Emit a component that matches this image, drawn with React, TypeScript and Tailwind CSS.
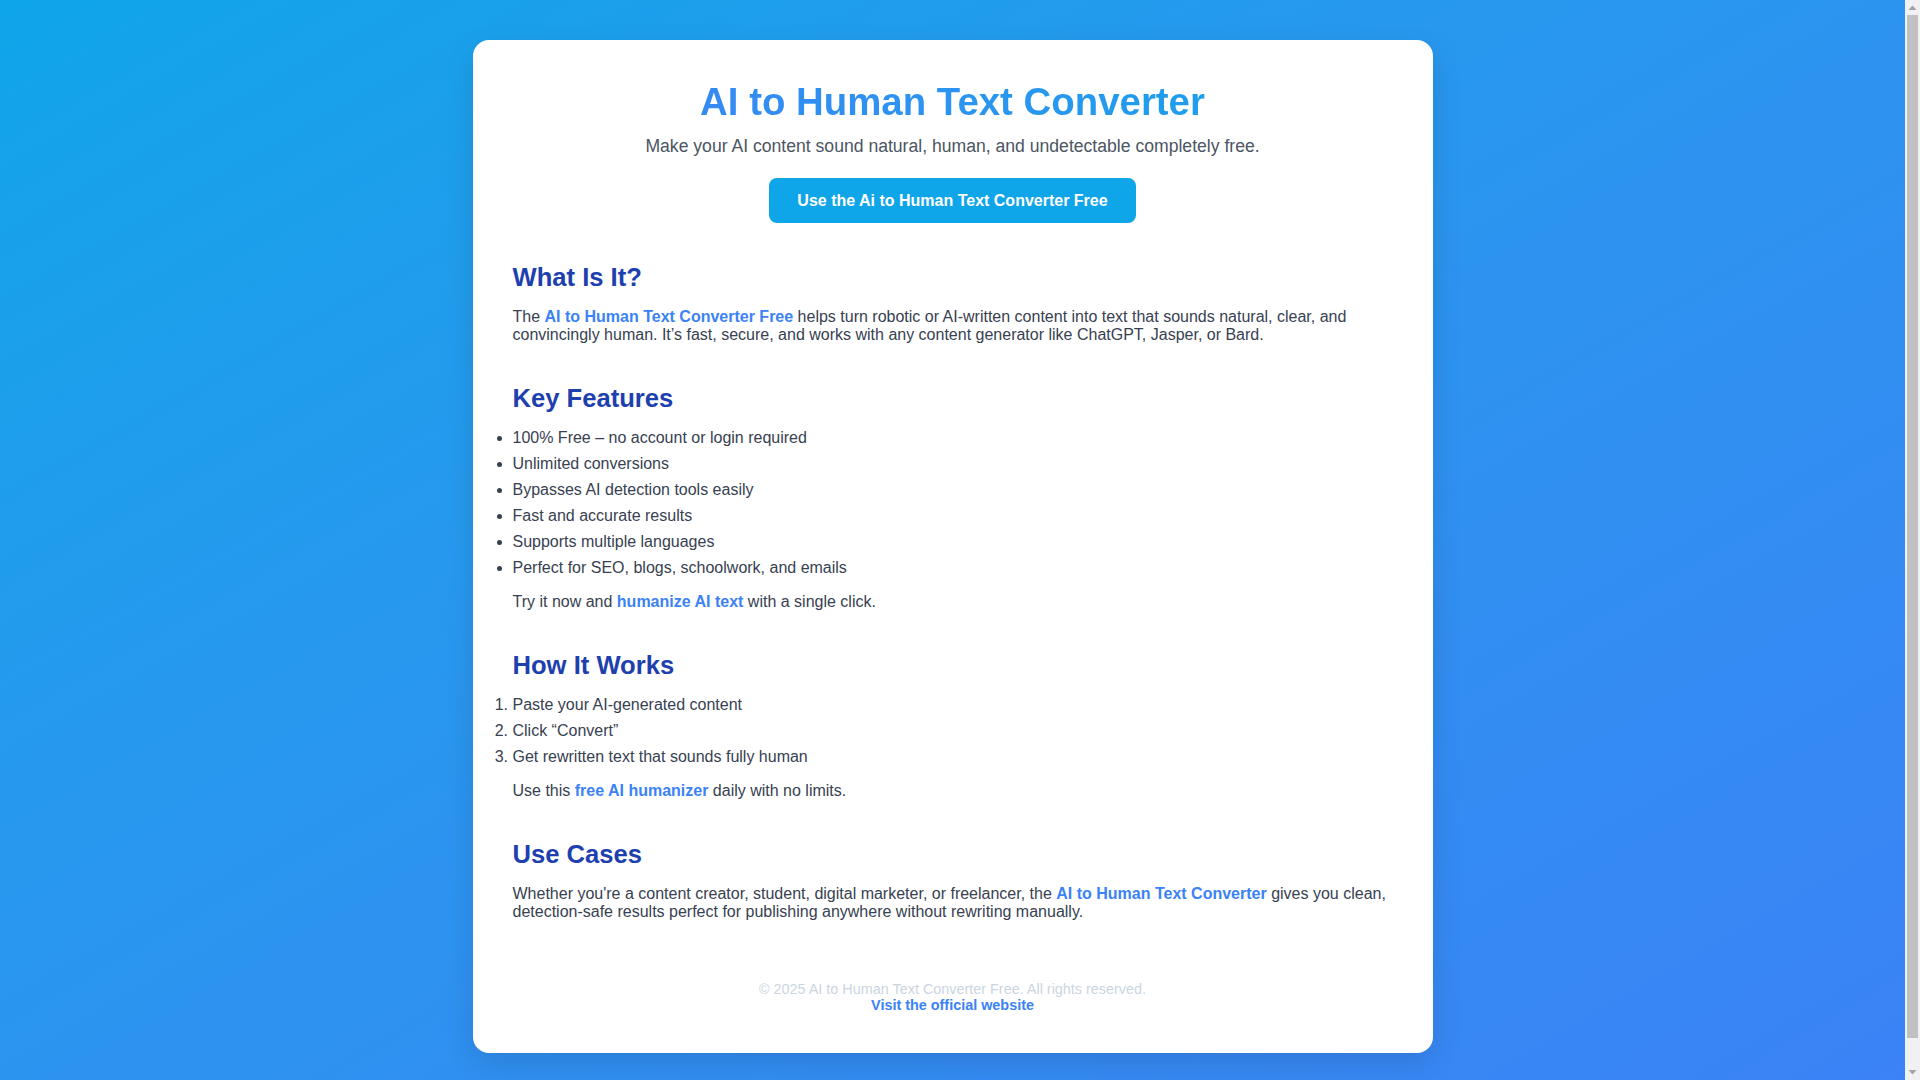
const features = [
  "100% Free – no account or login required",
  "Unlimited conversions",
  "Bypasses AI detection tools easily",
  "Fast and accurate results",
  "Supports multiple languages",
  "Perfect for SEO, blogs, schoolwork, and emails",
];

const steps = [
  "Paste your AI-generated content",
  "Click “Convert”",
  "Get rewritten text that sounds fully human",
];

function Link({ children }: { children: React.ReactNode }) {
  return <a href="#" className="font-bold text-[#3b82f6] no-underline">{children}</a>;
}

function Heading({ children }: { children: React.ReactNode }) {
  return <h2 className="mb-4 text-[25.6px] font-bold leading-[normal] text-[#1e40af]">{children}</h2>;
}

// browser scrollbar as seen in the screenshot
function Scrollbar() {
  return (
    <div className="fixed top-0 right-0 flex h-screen w-[15px] flex-col items-center bg-[#f1f1f1]">
      <svg width="15" height="15" viewBox="0 0 15 15" className="shrink-0">
        <path d="M3.5 10 L7.5 5.5 L11.5 10 Z" fill="#a3a3a3" />
      </svg>
      <div className="mb-[27px] w-[11px] flex-1 bg-[#c1c1c1]" />
      <svg width="15" height="15" viewBox="0 0 15 15" className="shrink-0">
        <path d="M3.5 5 L7.5 9.5 L11.5 5 Z" fill="#a3a3a3" />
      </svg>
    </div>
  );
}

export default function App() {
  return (
    <div
      className="min-h-screen bg-linear-to-br from-[#0ea5e9] to-[#3b82f6] py-10 pr-[15px] text-[16px] leading-[normal] text-[#374151]"
      style={{ fontFamily: '"Liberation Sans", Arial, Helvetica, sans-serif' }}
    >
      <div className="mx-auto max-w-[960px] rounded-2xl bg-white p-10 shadow-[0_10px_30px_rgba(0,0,0,0.12)]">
        {/* Header */}
        <header className="text-center">
          <h1 className="bg-linear-to-r from-[#3b82f6] to-[#0ea5e9] bg-clip-text text-[38.4px] font-bold leading-[normal] text-transparent">
            AI to Human Text Converter
          </h1>
          <p className="mt-3 text-[17.6px] leading-[normal] text-[#4b5563]">
            Make your AI content sound natural, human, and undetectable completely free.
          </p>
          <a
            href="#"
            className="mt-[21px] inline-block rounded-lg bg-[#0ea5e9] px-7 py-[13.6px] text-[16px] font-bold leading-[normal] text-white"
          >
            Use the Ai to Human Text Converter Free
          </a>
        </header>

        <section className="mt-10">
          <Heading>What Is It?</Heading>
          <p>
            The <Link>AI to Human Text Converter Free</Link> helps turn robotic or AI-written content into text that sounds natural, clear, and convincingly human. It’s fast, secure, and works with any content generator like ChatGPT, Jasper, or Bard.
          </p>
        </section>

        <section className="mt-10">
          <Heading>Key Features</Heading>
          <ul className="mb-4 list-outside list-disc">
            {features.map((f) => (
              <li key={f} className="mb-2">{f}</li>
            ))}
          </ul>
          <p>
            Try it now and <Link>humanize AI text</Link> with a single click.
          </p>
        </section>

        <section className="mt-10">
          <Heading>How It Works</Heading>
          <ol className="mb-4 list-outside list-decimal">
            {steps.map((s) => (
              <li key={s} className="mb-2">{s}</li>
            ))}
          </ol>
          <p>
            Use this <Link>free AI humanizer</Link> daily with no limits.
          </p>
        </section>

        <section className="mt-10">
          <Heading>Use Cases</Heading>
          <p>
            Whether you're a content creator, student, digital marketer, or freelancer, the <Link>AI to Human Text Converter</Link> gives you clean, detection-safe results perfect for publishing anywhere without rewriting manually.
          </p>
        </section>

        <footer className="mt-[60px] text-center text-[14.4px] leading-[normal] text-[#cbd5e1]">
          <p>© 2025 AI to Human Text Converter Free. All rights reserved.</p>
          <a href="#" className="font-bold text-[#3b82f6]">Visit the official website</a>
        </footer>
      </div>
      <Scrollbar />
    </div>
  );
}
